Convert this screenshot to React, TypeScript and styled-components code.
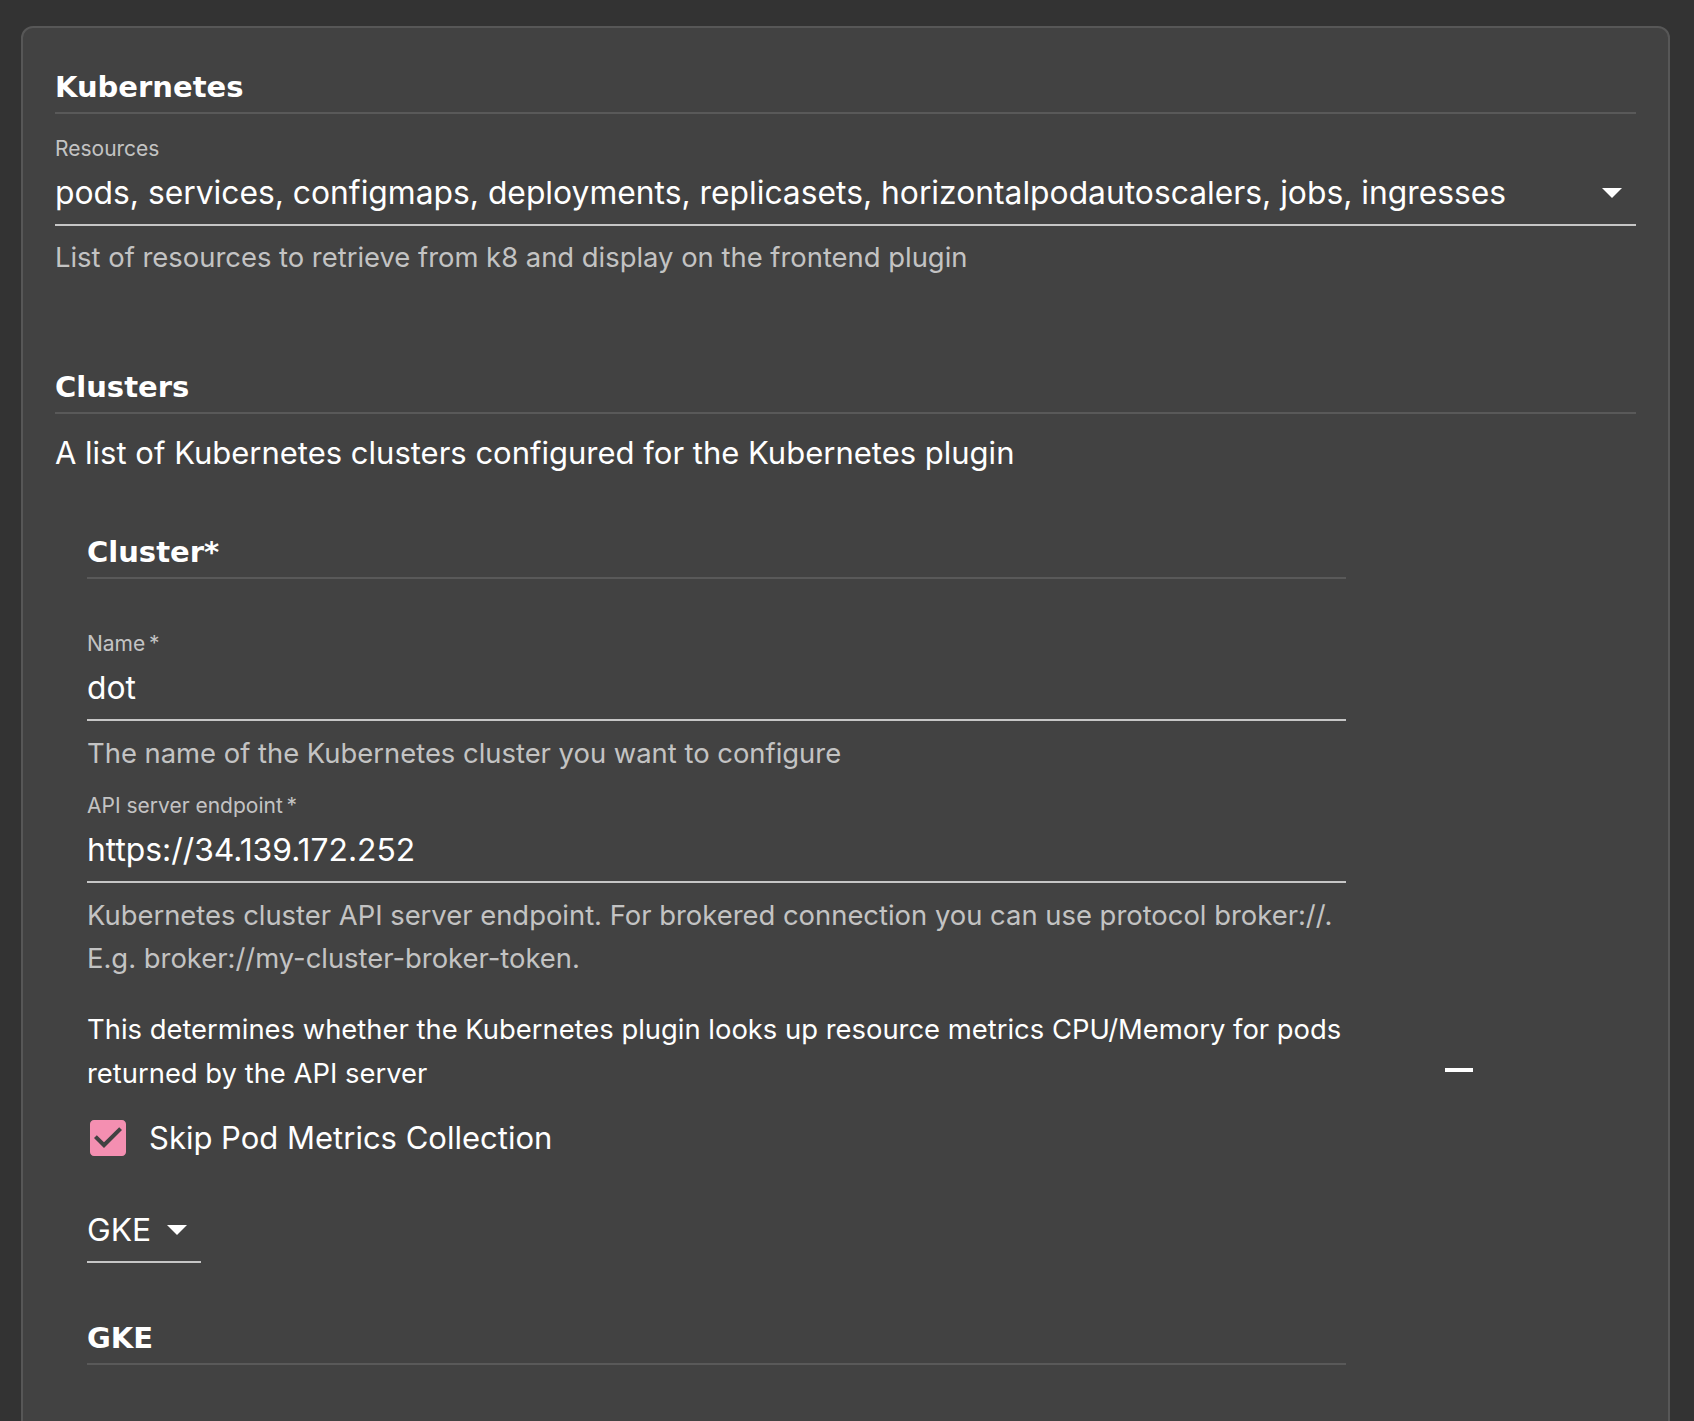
import React from "react";
import styled, { createGlobalStyle } from "styled-components";

const GlobalStyle = createGlobalStyle`
  html, body {
    margin: 0;
    padding: 0;
    background: #333333;
  }
  body {
    font-family: Inter, "Liberation Sans", sans-serif;
    color: #ffffff;
    -webkit-font-smoothing: antialiased;
  }
`;

const Page = styled.div`
  padding: 26px 24px 0 21px;
`;

const Card = styled.div`
  background: #424242;
  border: 2px solid #575757;
  border-radius: 12px;
  padding: 41px 32px 0;
`;

const SectionTitle = styled.h2<{ $mt?: number }>`
  margin: ${(p) => p.$mt ?? 0}px 0 0;
  font-family: "DejaVu Sans", "Open Sans", sans-serif;
  font-weight: 700;
  font-size: 29px;
  line-height: 36px;
  padding-bottom: 7px;
  border-bottom: 2px solid #595959;
  color: #ffffff;
`;

const FieldLabel = styled.div<{ $mt: number }>`
  margin-top: ${(p) => p.$mt}px;
  font-size: 21px;
  line-height: 25px;
  color: rgba(255, 255, 255, 0.7);
`;

const InputRow = styled.div<{ $mt: number; $inline?: boolean }>`
  margin-top: ${(p) => p.$mt}px;
  display: ${(p) => (p.$inline ? "inline-flex" : "flex")};
  align-items: center;
  padding-bottom: 13px;
  border-bottom: 2px solid rgba(255, 255, 255, 0.7);
`;

const InputValue = styled.div<{ $grow?: boolean }>`
  flex: ${(p) => (p.$grow ? 1 : "none")};
  font-size: 31.8px;
  line-height: 36px;
  color: #ffffff;
  white-space: nowrap;
`;

const Arrow = styled.svg<{ $ml?: number; $mr?: number }>`
  flex: none;
  display: block;
  width: 20px;
  height: 10px;
  margin-left: ${(p) => p.$ml ?? 0}px;
  margin-right: ${(p) => p.$mr ?? 0}px;
`;

const Helper = styled.div<{ $mt: number }>`
  margin-top: ${(p) => p.$mt}px;
  font-size: 27.4px;
  line-height: 43px;
  color: rgba(255, 255, 255, 0.7);
`;

const Description = styled.p`
  margin: 22px 0 0;
  font-size: 31px;
  line-height: 34px;
  color: #ffffff;
`;

const BodyText = styled.p`
  margin: 27px 0 0;
  font-size: 27.4px;
  line-height: 44px;
  color: #ffffff;
`;

const ArrayRow = styled.div`
  margin: 64px 0 0 32px;
  display: grid;
  grid-template-columns: 1259px 1fr;
  align-items: center;
`;

const Item = styled.div`
  padding-bottom: 241px;
  display: flex;
  flex-direction: column;
  align-items: stretch;
`;

const Toolbar = styled.div`
  padding-left: 89px;
  display: flex;
  align-items: center;
`;

const IconButton = styled.button`
  width: 48px;
  height: 48px;
  padding: 0;
  border: none;
  background: transparent;
  cursor: pointer;
  display: flex;
  align-items: center;
  justify-content: center;
`;

const CheckRow = styled.label`
  margin-top: 19px;
  display: flex;
  align-items: center;
  gap: 17px;
  cursor: pointer;
`;

const CheckIcon = styled.svg`
  flex: none;
  width: 48px;
  height: 48px;
  margin-left: -3px;
`;

const CheckLabel = styled.span`
  font-size: 31px;
  line-height: 36px;
  color: #ffffff;
`;

const SelectWrap = styled.div`
  margin-top: 50px;
`;

const DropArrow: React.FC<{ ml?: number; mr?: number }> = ({ ml, mr }) => (
  <Arrow viewBox="0 0 10 5" $ml={ml} $mr={mr} aria-hidden>
    <path d="M0 0l5 5 5-5z" fill="#ffffff" />
  </Arrow>
);

export default function App() {
  return (
    <>
      <GlobalStyle />
      <Page>
        <Card>
          <SectionTitle>Kubernetes</SectionTitle>
          <FieldLabel $mt={22}>Resources</FieldLabel>
          <InputRow $mt={14}>
            <InputValue $grow>
              pods, services, configmaps, deployments, replicasets, horizontalpodautoscalers, jobs, ingresses
            </InputValue>
            <DropArrow mr={14} />
          </InputRow>
          <Helper $mt={10}>List of resources to retrieve from k8 and display on the frontend plugin</Helper>

          <SectionTitle $mt={90}>Clusters</SectionTitle>
          <Description>A list of Kubernetes clusters configured for the Kubernetes plugin</Description>

          <ArrayRow>
            <Item>
              <SectionTitle>Cluster*</SectionTitle>
              <FieldLabel $mt={52}>Name{"\u2009"}*</FieldLabel>
              <InputRow $mt={14}>
                <InputValue $grow>dot</InputValue>
              </InputRow>
              <Helper $mt={11}>The name of the Kubernetes cluster you want to configure</Helper>

              <FieldLabel $mt={18}>API server endpoint{"\u2009"}*</FieldLabel>
              <InputRow $mt={14}>
                <InputValue $grow>https://34.139.172.252</InputValue>
              </InputRow>
              <Helper $mt={11}>
                Kubernetes cluster API server endpoint. For brokered connection you can use protocol broker://.
                <br />
                E.g. broker://my-cluster-broker-token.
              </Helper>

              <BodyText>
                This determines whether the Kubernetes plugin looks up resource metrics CPU/Memory for pods
                <br />
                returned by the API server
              </BodyText>

              <CheckRow>
                <CheckIcon viewBox="0 0 24 24" aria-hidden>
                  <path
                    fill="#f48fb1"
                    d="M19 3H5c-1.11 0-2 .9-2 2v14c0 1.1.89 2 2 2h14c1.11 0 2-.9 2-2V5c0-1.1-.89-2-2-2zm-9 14l-5-5 1.41-1.41L10 14.17l7.59-7.59L19 8l-9 9z"
                  />
                </CheckIcon>
                <CheckLabel>Skip Pod Metrics Collection</CheckLabel>
              </CheckRow>

              <SelectWrap>
                <InputRow $mt={0} $inline>
                  <InputValue>GKE</InputValue>
                  <DropArrow ml={16} mr={14} />
                </InputRow>
              </SelectWrap>

              <SectionTitle $mt={57}>GKE</SectionTitle>
            </Item>
            <Toolbar>
              <IconButton aria-label="Remove">
                <svg width="48" height="48" viewBox="0 0 24 24" aria-hidden>
                  <path d="M19 13H5v-2h14v2z" fill="#ffffff" />
                </svg>
              </IconButton>
            </Toolbar>
          </ArrayRow>
        </Card>
      </Page>
    </>
  );
}
